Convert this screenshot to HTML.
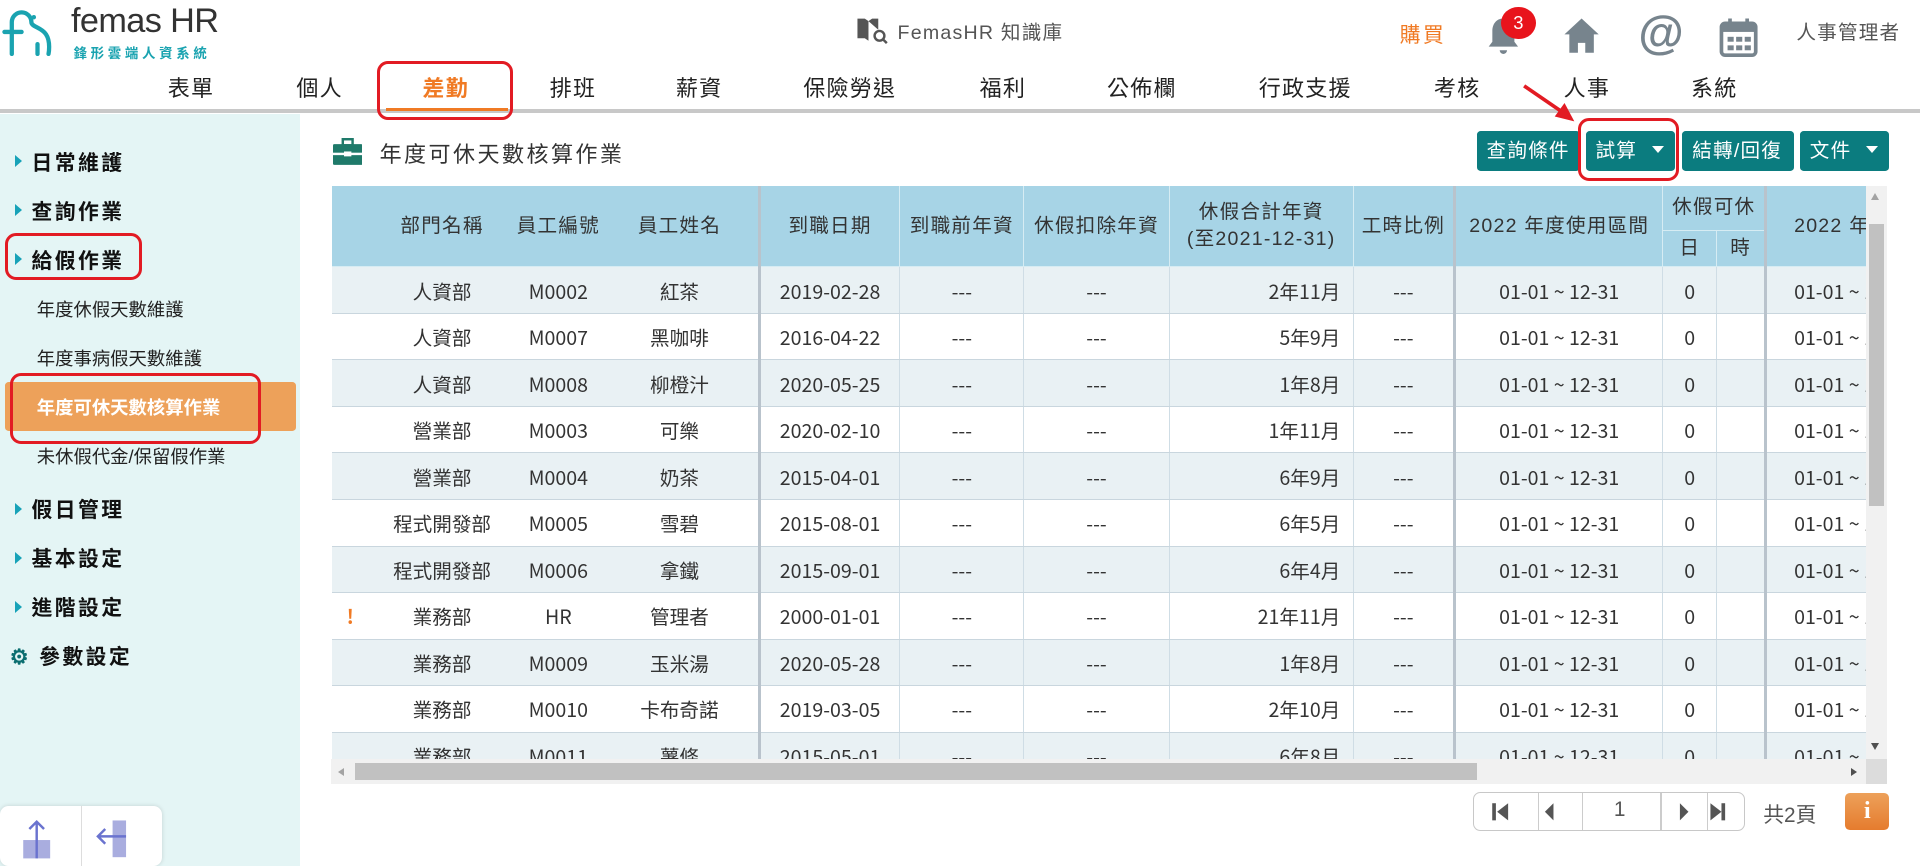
<!DOCTYPE html>
<html><head><meta charset="utf-8">
<style>
*{box-sizing:border-box;margin:0;padding:0}
html,body{width:1920px;height:866px;overflow:hidden;background:#fff}
#w{zoom:1.22449;width:1568px;height:707px;position:relative;font-family:"Liberation Sans","Noto Sans CJK TC",sans-serif;color:#333}
.a{position:absolute}
.nav{position:absolute;top:58px;font-size:18px;color:#222;letter-spacing:1px}
.side{position:absolute;left:0;top:93px;width:245px;height:614px;background:#e4f5f5}
.si{position:absolute;left:12px;font-size:17px;color:#111;letter-spacing:2px;font-weight:bold}
.si:before{content:"";display:inline-block;border-left:6px solid #17a2b8;border-top:5px solid transparent;border-bottom:5px solid transparent;margin-right:8px;vertical-align:2px}
.sub{position:absolute;left:30px;font-size:15px;color:#222}
.btn{position:absolute;top:107px;height:33px;background:#0b7c7f;color:#fff;font-size:16px;border-radius:3px;line-height:33px;padding:0 8px;letter-spacing:1px;white-space:nowrap}
.car{display:inline-block;border-top:6px solid #fff;border-left:5px solid transparent;border-right:5px solid transparent;vertical-align:3px;margin-left:12px}
.rb{position:absolute;border:2.5px solid #e21b23;border-radius:9px}
#tb{position:absolute;left:271px;top:152px;width:1253px;height:468px;overflow:hidden}
table{border-collapse:collapse;table-layout:fixed;width:1400px;font-size:16px}
th{background:#a7d4e6;font-weight:normal;color:#333;border-left:1px solid #d6ecf3;border-bottom:1px solid #d6ecf3;letter-spacing:1px;line-height:22px}
td{height:38px;border-left:1px solid #cfdde5;border-bottom:1px solid #c9d6de;text-align:center;color:#333;font-family:"Noto Sans CJK TC",sans-serif;line-height:20px;vertical-align:middle;padding-top:1px}
tr:nth-child(odd) td{background:#e9f1f4}
.tk{border-left:3px solid #b9c3cc!important}
.nb{border-left:none!important}
.r{text-align:right;padding-right:10px}
</style></head><body><div id="w">
<svg class="a" style="left:2px;top:4px" width="44" height="42" viewBox="0 0 44 42"><path d="M8 40V14a8 8 0 0 1 16 0c0 4 8 4 12 10s2 16 2 16" fill="none" stroke="#1aa3b0" stroke-width="3.5" stroke-linecap="round"/><path d="M2 22h14" stroke="#1aa3b0" stroke-width="3.5" stroke-linecap="round"/><circle cx="26" cy="10" r="1.8" fill="#1aa3b0"/><path d="M29 32v8" stroke="#1aa3b0" stroke-width="3.5" stroke-linecap="round"/></svg>
<div class="a" style="left:58px;top:2px;font-size:28px;color:#333;letter-spacing:-0.5px">femas HR</div>
<div class="a" style="left:60px;top:34px;font-size:11px;color:#1aa3b0;letter-spacing:3px;font-weight:bold">鋒形雲端人資系統</div>
<svg class="a" style="left:698px;top:12px" width="28" height="24" viewBox="0 0 28 24"><path d="M2 3h6l3 2v16l-3-2H2z M11 5l3-2h5v9" fill="#555"/><circle cx="20" cy="17" r="4" fill="none" stroke="#555" stroke-width="2"/><path d="M23 20l3 3" stroke="#555" stroke-width="2"/></svg>
<div class="a" style="left:733px;top:13px;font-size:16px;color:#555;letter-spacing:1px">FemasHR 知識庫</div>
<div class="a" style="left:1143px;top:15px;font-size:17px;color:#f07a24;letter-spacing:2px">購買</div>
<svg class="a" style="left:1213px;top:13px" width="30" height="34" viewBox="0 0 30 34"><path d="M15 2c-6 0-9 5-9 10v9l-3 4h24l-3-4v-9c0-5-3-10-9-10z" fill="#77848d"/><path d="M12 28a3 3 0 0 0 6 0z" fill="#77848d"/></svg>
<div class="a" style="left:1226px;top:6px;width:28px;height:26px;border-radius:50%;background:#e8141c;color:#fff;font-size:15px;text-align:center;line-height:26px">3</div>
<svg class="a" style="left:1276px;top:13px" width="32" height="32" viewBox="0 0 32 32"><path d="M16 2L2 15h4v15h7v-8h6v8h7V15h4z" fill="#77848d"/></svg>
<div class="a" style="left:1338px;top:4px;font-size:38px;color:#77848d;font-weight:bold">@</div>
<svg class="a" style="left:1404px;top:13px" width="32" height="34" viewBox="0 0 32 34"><rect x="2" y="6" width="28" height="26" rx="3" fill="none" stroke="#77848d" stroke-width="3"/><rect x="2" y="6" width="28" height="7" fill="#77848d"/><path d="M9 2v7M23 2v7" stroke="#77848d" stroke-width="3"/><g fill="#77848d"><rect x="7" y="17" width="5" height="4"/><rect x="14" y="17" width="5" height="4"/><rect x="21" y="17" width="5" height="4"/><rect x="7" y="24" width="5" height="4"/><rect x="14" y="24" width="5" height="4"/><rect x="21" y="24" width="5" height="4"/></g></svg>
<div class="a" style="left:1467px;top:13px;font-size:16px;color:#555;letter-spacing:1px">人事管理者</div>
<div class="nav" style="left:137px">表單</div><div class="nav" style="left:242px">個人</div>
<div class="nav" style="left:345px;color:#f07a24;font-weight:bold">差勤</div>
<div class="nav" style="left:449px">排班</div><div class="nav" style="left:552px">薪資</div><div class="nav" style="left:656px">保險勞退</div>
<div class="nav" style="left:800px">福利</div><div class="nav" style="left:904px">公佈欄</div><div class="nav" style="left:1028px">行政支援</div>
<div class="nav" style="left:1171px">考核</div><div class="nav" style="left:1277px">人事</div><div class="nav" style="left:1381px">系統</div>
<div class="a" style="left:0;top:89px;width:1568px;height:3px;background:#c8c8c8"></div>
<div class="a" style="left:315px;top:88px;width:100px;height:3px;background:#f07a24"></div>
<div class="rb" style="left:308px;top:50px;width:111px;height:48px"></div>
<div class="side"></div>
<div class="si" style="top:119px">日常維護</div>
<div class="si" style="top:159px">查詢作業</div>
<div class="si" style="top:199px">給假作業</div>
<div class="sub" style="top:242px">年度休假天數維護</div>
<div class="sub" style="top:282px">年度事病假天數維護</div>
<div class="a" style="left:4px;top:312px;width:238px;height:40px;background:#eda15a;border-radius:3px"></div>
<div class="sub" style="top:322px;color:#fff;font-weight:bold">年度可休天數核算作業</div>
<div class="sub" style="top:362px">未休假代金/保留假作業</div>
<div class="si" style="top:403px">假日管理</div>
<div class="si" style="top:443px">基本設定</div>
<div class="si" style="top:483px">進階設定</div>
<div class="a" style="left:8px;top:523px;font-size:17px;font-weight:bold;color:#111;letter-spacing:2px"><span style="color:#0b6e70">⚙</span> 參數設定</div>
<div class="rb" style="left:4px;top:190px;width:112px;height:39px"></div>
<div class="rb" style="left:8px;top:305px;width:205px;height:58px"></div>
<div class="a" style="left:0;top:658px;width:132px;height:49px;background:#fff;border-radius:7px;box-shadow:0 0 4px rgba(0,0,0,.15)"></div>
<div class="a" style="left:66px;top:658px;width:1px;height:49px;background:#ddd"></div>
<svg class="a" style="left:18px;top:668px" width="30" height="36" viewBox="0 0 30 36"><rect x="1" y="18" width="22" height="15" fill="#a9addf"/><path d="M12 33V3M6 9l6-6 6 6" stroke="#6a73cf" stroke-width="2" fill="none"/></svg>
<svg class="a" style="left:76px;top:668px" width="40" height="36" viewBox="0 0 40 36"><rect x="16" y="2" width="11" height="30" fill="#a9addf"/><path d="M27 15H4M10 9l-6 6 6 6" stroke="#6a73cf" stroke-width="2" fill="none"/></svg>
<svg class="a" style="left:272px;top:113px" width="24" height="22" viewBox="0 0 24 22"><rect x="0" y="5" width="24" height="17" rx="1" fill="#1f7a6a"/><rect x="8" y="1" width="8" height="5" fill="none" stroke="#1f7a6a" stroke-width="2"/><rect x="0" y="12" width="24" height="2" fill="#fff"/><rect x="9" y="11" width="6" height="4" fill="#fff"/></svg>
<div class="a" style="left:310px;top:112px;font-size:18px;color:#333;letter-spacing:2px">年度可休天數核算作業</div>
<div class="btn" style="left:1206px;width:84px">查詢條件</div>
<div class="btn" style="left:1295px;width:73px">試算<span class="car"></span></div>
<div class="btn" style="left:1374px;width:91px">結轉/回復</div>
<div class="btn" style="left:1470px;width:73px">文件<span class="car"></span></div>
<div class="rb" style="left:1289px;top:96px;width:82px;height:52px"></div>
<svg class="a" style="left:1240px;top:66px" width="52" height="36" viewBox="0 0 52 36"><path d="M5 4L40 28" stroke="#e21b23" stroke-width="3"/><path d="M46 33L30 29l8-11z" fill="#e21b23"/></svg>
<div id="tb"><table>
<colgroup><col style="width:30px"><col style="width:120px"><col style="width:70px"><col style="width:129px"><col style="width:115px"><col style="width:101px"><col style="width:119px"><col style="width:150px"><col style="width:83px"><col style="width:170px"><col style="width:44px"><col style="width:40px"><col style="width:229px"></colgroup>
<tr style="height:36px"><th rowspan="2" class="nb"></th><th rowspan="2" class="nb">部門名稱</th><th rowspan="2" class="nb">員工編號</th><th rowspan="2" class="nb">員工姓名</th><th rowspan="2" class="tk">到職日期</th><th rowspan="2">到職前年資</th><th rowspan="2">休假扣除年資</th><th rowspan="2">休假合計年資<br>(至2021-12-31)</th><th rowspan="2">工時比例</th><th rowspan="2" class="tk">2022 年度使用區間</th><th colspan="2">休假可休</th><th rowspan="2" class="tk" style="text-align:left;padding-left:22px">2022 年度使用區間</th></tr>
<tr style="height:30px"><th>日</th><th>時</th></tr>
<tr><td class="nb"></td><td class="nb">人資部</td><td class="nb">M0002</td><td class="nb">紅茶</td><td class="tk">2019-02-28</td><td>---</td><td>---</td><td class="r">2年11月</td><td>---</td><td class="tk">01-01 ~ 12-31</td><td>0</td><td></td><td class="tk" style="text-align:left;padding-left:22px">01-01 ~ 12-31</td></tr>
<tr><td class="nb"></td><td class="nb">人資部</td><td class="nb">M0007</td><td class="nb">黑咖啡</td><td class="tk">2016-04-22</td><td>---</td><td>---</td><td class="r">5年9月</td><td>---</td><td class="tk">01-01 ~ 12-31</td><td>0</td><td></td><td class="tk" style="text-align:left;padding-left:22px">01-01 ~ 12-31</td></tr>
<tr><td class="nb"></td><td class="nb">人資部</td><td class="nb">M0008</td><td class="nb">柳橙汁</td><td class="tk">2020-05-25</td><td>---</td><td>---</td><td class="r">1年8月</td><td>---</td><td class="tk">01-01 ~ 12-31</td><td>0</td><td></td><td class="tk" style="text-align:left;padding-left:22px">01-01 ~ 12-31</td></tr>
<tr><td class="nb"></td><td class="nb">營業部</td><td class="nb">M0003</td><td class="nb">可樂</td><td class="tk">2020-02-10</td><td>---</td><td>---</td><td class="r">1年11月</td><td>---</td><td class="tk">01-01 ~ 12-31</td><td>0</td><td></td><td class="tk" style="text-align:left;padding-left:22px">01-01 ~ 12-31</td></tr>
<tr><td class="nb"></td><td class="nb">營業部</td><td class="nb">M0004</td><td class="nb">奶茶</td><td class="tk">2015-04-01</td><td>---</td><td>---</td><td class="r">6年9月</td><td>---</td><td class="tk">01-01 ~ 12-31</td><td>0</td><td></td><td class="tk" style="text-align:left;padding-left:22px">01-01 ~ 12-31</td></tr>
<tr><td class="nb"></td><td class="nb">程式開發部</td><td class="nb">M0005</td><td class="nb">雪碧</td><td class="tk">2015-08-01</td><td>---</td><td>---</td><td class="r">6年5月</td><td>---</td><td class="tk">01-01 ~ 12-31</td><td>0</td><td></td><td class="tk" style="text-align:left;padding-left:22px">01-01 ~ 12-31</td></tr>
<tr><td class="nb"></td><td class="nb">程式開發部</td><td class="nb">M0006</td><td class="nb">拿鐵</td><td class="tk">2015-09-01</td><td>---</td><td>---</td><td class="r">6年4月</td><td>---</td><td class="tk">01-01 ~ 12-31</td><td>0</td><td></td><td class="tk" style="text-align:left;padding-left:22px">01-01 ~ 12-31</td></tr>
<tr><td class="nb" style="color:#f07a24;font-weight:bold">!</td><td class="nb">業務部</td><td class="nb">HR</td><td class="nb">管理者</td><td class="tk">2000-01-01</td><td>---</td><td>---</td><td class="r">21年11月</td><td>---</td><td class="tk">01-01 ~ 12-31</td><td>0</td><td></td><td class="tk" style="text-align:left;padding-left:22px">01-01 ~ 12-31</td></tr>
<tr><td class="nb"></td><td class="nb">業務部</td><td class="nb">M0009</td><td class="nb">玉米湯</td><td class="tk">2020-05-28</td><td>---</td><td>---</td><td class="r">1年8月</td><td>---</td><td class="tk">01-01 ~ 12-31</td><td>0</td><td></td><td class="tk" style="text-align:left;padding-left:22px">01-01 ~ 12-31</td></tr>
<tr><td class="nb"></td><td class="nb">業務部</td><td class="nb">M0010</td><td class="nb">卡布奇諾</td><td class="tk">2019-03-05</td><td>---</td><td>---</td><td class="r">2年10月</td><td>---</td><td class="tk">01-01 ~ 12-31</td><td>0</td><td></td><td class="tk" style="text-align:left;padding-left:22px">01-01 ~ 12-31</td></tr>
<tr><td class="nb"></td><td class="nb">業務部</td><td class="nb">M0011</td><td class="nb">薯條</td><td class="tk">2015-05-01</td><td>---</td><td>---</td><td class="r">6年8月</td><td>---</td><td class="tk">01-01 ~ 12-31</td><td>0</td><td></td><td class="tk" style="text-align:left;padding-left:22px">01-01 ~ 12-31</td></tr>
</table></div>
<div class="a" style="left:1524px;top:152px;width:17px;height:468px;background:#f1f1f1"></div>
<div class="a" style="left:1526px;top:183px;width:13px;height:230px;background:#c1c1c1"></div>
<div class="a" style="left:1528px;top:158px;border-bottom:6px solid #a3a3a3;border-left:4px solid transparent;border-right:4px solid transparent"></div>
<div class="a" style="left:1528px;top:607px;border-top:6px solid #505050;border-left:4px solid transparent;border-right:4px solid transparent"></div>
<div class="a" style="left:270px;top:620px;width:1254px;height:20px;background:#f1f1f1"></div>
<div class="a" style="left:290px;top:623px;width:916px;height:14px;background:#c1c1c1"></div>
<div class="a" style="left:276px;top:627px;border-right:5px solid #a3a3a3;border-top:4px solid transparent;border-bottom:4px solid transparent"></div>
<div class="a" style="left:1512px;top:627px;border-left:5px solid #505050;border-top:4px solid transparent;border-bottom:4px solid transparent"></div>
<div class="a" style="left:1524px;top:620px;width:17px;height:20px;background:#dcdcdc"></div>
<div class="a" style="left:1203px;top:647px;width:222px;height:32px;border:1px solid #c8c8c8;border-radius:6px;background:#fff"></div>
<div class="a" style="left:1256px;top:648px;width:1px;height:30px;background:#ccc"></div>
<div class="a" style="left:1292px;top:648px;width:1px;height:30px;background:#ccc"></div>
<div class="a" style="left:1356px;top:648px;width:1px;height:30px;background:#ccc"></div>
<div class="a" style="left:1394px;top:648px;width:1px;height:30px;background:#ccc"></div>
<svg class="a" style="left:1218px;top:655px" width="16" height="16" viewBox="0 0 16 16"><rect x="1" y="1" width="3" height="14" fill="#555"/><path d="M14 1v14L5 8z" fill="#555"/></svg>
<svg class="a" style="left:1258px;top:655px" width="16" height="16" viewBox="0 0 16 16"><path d="M11 1v14L4 8z" fill="#555"/></svg>
<div class="a" style="left:1318px;top:652px;font-size:17px;color:#555">1</div>
<svg class="a" style="left:1368px;top:655px" width="16" height="16" viewBox="0 0 16 16"><path d="M4 1v14l7-7z" fill="#555"/></svg>
<svg class="a" style="left:1395px;top:655px" width="16" height="16" viewBox="0 0 16 16"><path d="M2 1v14l9-7z" fill="#555"/><rect x="11" y="1" width="3" height="14" fill="#555"/></svg>
<div class="a" style="left:1440px;top:652px;font-size:17px;color:#555">共2頁</div>
<div class="a" style="left:1507px;top:648px;width:36px;height:30px;border-radius:4px;background:linear-gradient(#eda15a,#e57c2e);color:#fff;font-size:20px;text-align:center;line-height:30px;font-weight:bold;font-family:'Liberation Serif',serif">i</div>
</div></body></html>
